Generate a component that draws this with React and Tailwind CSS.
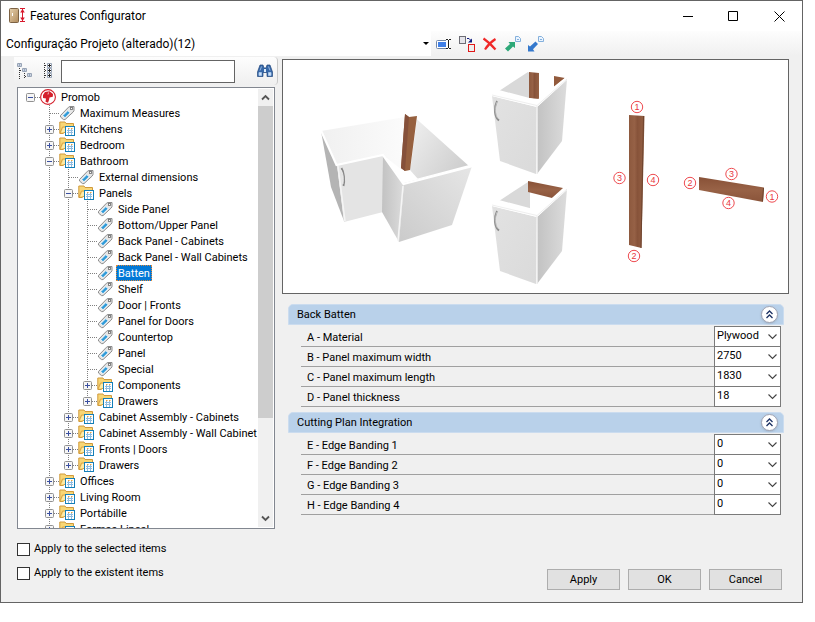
import { useState } from 'react'
import clsx from 'clsx'

const treeItems = [
  { label: 'Promob', depth: 0, icon: 'brand', state: 'open', last: true },
  { label: 'Maximum Measures', depth: 1, icon: 'tag' },
  { label: 'Kitchens', depth: 1, icon: 'folder', state: 'closed' },
  { label: 'Bedroom', depth: 1, icon: 'folder', state: 'closed' },
  { label: 'Bathroom', depth: 1, icon: 'folder', state: 'open' },
  { label: 'External dimensions', depth: 2, icon: 'tag' },
  { label: 'Panels', depth: 2, icon: 'folder', state: 'open' },
  { label: 'Side Panel', depth: 3, icon: 'tag' },
  { label: 'Bottom/Upper Panel', depth: 3, icon: 'tag' },
  { label: 'Back Panel - Cabinets', depth: 3, icon: 'tag' },
  { label: 'Back Panel - Wall Cabinets', depth: 3, icon: 'tag' },
  { label: 'Batten', depth: 3, icon: 'tag' },
  { label: 'Shelf', depth: 3, icon: 'tag' },
  { label: 'Door | Fronts', depth: 3, icon: 'tag' },
  { label: 'Panel for Doors', depth: 3, icon: 'tag' },
  { label: 'Countertop', depth: 3, icon: 'tag' },
  { label: 'Panel', depth: 3, icon: 'tag' },
  { label: 'Special', depth: 3, icon: 'tag' },
  { label: 'Components', depth: 3, icon: 'folder', state: 'closed' },
  { label: 'Drawers', depth: 3, icon: 'folder', state: 'closed', last: true },
  { label: 'Cabinet Assembly - Cabinets', depth: 2, icon: 'folder', state: 'closed' },
  { label: 'Cabinet Assembly - Wall Cabinet', depth: 2, icon: 'folder', state: 'closed' },
  { label: 'Fronts | Doors', depth: 2, icon: 'folder', state: 'closed' },
  { label: 'Drawers', depth: 2, icon: 'folder', state: 'closed', last: true },
  { label: 'Offices', depth: 1, icon: 'folder', state: 'closed' },
  { label: 'Living Room', depth: 1, icon: 'folder', state: 'closed' },
  { label: 'Portábille', depth: 1, icon: 'folder', state: 'closed' },
  { label: 'Formas Lineal', depth: 1, icon: 'folder', state: 'closed' },
]

const groups = [
  {
    title: 'Back Batten',
    fields: [
      { id: 'a', label: 'A - Material', value: 'Plywood' },
      { id: 'b', label: 'B - Panel maximum width', value: '2750' },
      { id: 'c', label: 'C - Panel maximum length', value: '1830' },
      { id: 'd', label: 'D - Panel thickness', value: '18' },
    ],
  },
  {
    title: 'Cutting Plan Integration',
    fields: [
      { id: 'e', label: 'E - Edge Banding 1', value: '0' },
      { id: 'f', label: 'F - Edge Banding 2', value: '0' },
      { id: 'g', label: 'G - Edge Banding 3', value: '0' },
      { id: 'h', label: 'H - Edge Banding 4', value: '0' },
    ],
  },
]

function BrandIcon() {
  return (
    <svg width="17" height="16" viewBox="0 0 17 16">
      <circle cx="8" cy="8" r="7.4" fill="#fff" stroke="#d4202c" strokeWidth="1.1" />
      <path d="M3 6 5 3 9.5 2.2 13 5 12.8 7.8 9.5 8.5 9 11 8 13.8 5.5 12.8 6 9.5 3 9Z" fill="#d4202c" />
      <path d="M8.5 3.5 8 5.5" stroke="#fff" strokeWidth=".7" fill="none" />
    </svg>
  )
}

function TagIcon() {
  return (
    <svg width="17" height="16" viewBox="0 0 17 16">
      <path d="M1.5 10.5 9.5 2.2 11 1.5H15V5.5L14.2 7 6 14.6H4.5L1.5 12Z" fill="#e6e6e6" stroke="#8c8c8c" strokeLinejoin="round" />
      <path d="M3.8 10.6 8.8 5.6 11 7.8 6 12.8Z" fill="#2f9ad8" stroke="#fff" strokeWidth=".8" />
      <rect x="11.5" y="2.5" width="2" height="2" fill="#fff" stroke="#777" strokeWidth=".9" />
    </svg>
  )
}

function FolderIcon() {
  return (
    <svg width="17" height="16" viewBox="0 0 17 16">
      <path d="M.8 12.5V1H6l1 1.5h7.5V11H6l-2 1.5Z" fill="#f8d675" stroke="#d09a3c" />
      <path d="M2.5 11 4.5 6.5H8V11Z" fill="#fdeaa8" />
      <path d="M1 12 3.5 6H9" fill="none" stroke="#d9a548" />
      <rect x="6.5" y="5.5" width="9" height="9" fill="#fff" stroke="#157fb8" />
      <path d="M8 9.5h6M8 11.5h6M9.5 8v6M12.5 8v6" stroke="#8fbce0" />
      <path d="M9 7.5h1.5M12 7.5h1.5" stroke="#e8a33d" />
    </svg>
  )
}

const itemIcons = { brand: BrandIcon, tag: TagIcon, folder: FolderIcon }

function Guide() {
  return (
    <svg width="19" height="16" viewBox="0 0 19 16" className="shrink-0">
      <path d="M9.5 0V16" stroke="#808080" strokeDasharray="1 1" />
    </svg>
  )
}

function Branch({ item }) {
  return (
    <svg width="19" height="16" viewBox="0 0 19 16" className="shrink-0">
      {item.depth > 0 && <path d={item.last ? 'M9.5 0V8' : 'M9.5 0V16'} stroke="#808080" strokeDasharray="1 1" />}
      <path d="M10 8.5H19" stroke="#808080" strokeDasharray="1 1" />
      {item.state && (
        <>
          <rect x="5.5" y="4.5" width="8" height="8" rx="1" fill="#f6f6f6" stroke="#919191" />
          <path d={item.state === 'open' ? 'M7 8.5h5' : 'M7 8.5h5M9.5 6v5'} stroke="#3a4fa0" />
        </>
      )}
    </svg>
  )
}

function TreeItem({ item, selected, onSelect }) {
  const Icon = itemIcons[item.icon]
  return (
    <li className="flex h-4 items-center whitespace-nowrap">
      {Array.from({ length: item.depth }, (_, i) =>
        i === 0 ? <span key={i} className="w-[19px] shrink-0" /> : <Guide key={i} />
      )}
      <Branch item={item} />
      <span className="w-[19px] shrink-0">
        <Icon />
      </span>
      <button
        onClick={onSelect}
        className={clsx(
          'h-4 px-[2px] pt-px leading-4',
          selected && 'bg-[#0078d7] text-white outline-1 -outline-offset-1 outline-dotted outline-[#e08a3c]'
        )}
      >
        {item.label}
      </button>
    </li>
  )
}

function Tree() {
  const [selected, setSelected] = useState(11)
  return (
    <div className="ml-[3px] mt-[2px] flex h-[442px] border border-[#828790] bg-white">
      <ul className="min-w-0 grow overflow-hidden pl-[3px] pt-px">
        {treeItems.map((item, i) => (
          <TreeItem key={i} item={item} selected={i === selected} onSelect={() => setSelected(i)} />
        ))}
      </ul>
      <div className="my-px mr-px flex w-[15px] shrink-0 flex-col items-center bg-[#f0f0f0]">
        <svg width="15" height="17" viewBox="1 0 15 17" className="shrink-0">
          <path d="M5 10.5 8.5 7 12 10.5" fill="none" stroke="#555" strokeWidth="1.8" />
        </svg>
        <div className="h-[312px] w-full bg-[#cdcdcd]" />
        <svg width="15" height="17" viewBox="1 0 15 17" className="mt-auto shrink-0">
          <path d="M5 6.5 8.5 10 12 6.5" fill="none" stroke="#555" strokeWidth="1.8" />
        </svg>
      </div>
    </div>
  )
}

function TitleBar() {
  return (
    <header className="flex h-[30px] items-center bg-white pl-2">
      <svg width="18" height="16" viewBox="0 0 18 16">
        <defs>
          <linearGradient id="door" x1="0" x2="1" y2="1">
            <stop offset="0" stopColor="#e5d0ad" />
            <stop offset="1" stopColor="#b08b5c" />
          </linearGradient>
        </defs>
        <rect x=".5" y=".5" width="9" height="14" rx="1" fill="url(#door)" stroke="#7c6244" />
        <path d="M3.5 5v3" stroke="#fff" />
        <path d="M11 .5h5M11 13.5h5M13.5 1v12" stroke="#d8182c" />
        <path d="M11.2 4.5 13.5 1 15.8 4.5ZM11.2 9.5 13.5 13 15.8 9.5Z" fill="#d8182c" />
      </svg>
      <h1 className="ml-[3px] font-[Roboto,sans-serif] text-[12px]">Features Configurator</h1>
      <div className="ml-auto flex">
        <button aria-label="Minimize" className="flex h-7 w-[45px] items-center justify-center">
          <svg width="11" height="11" viewBox="0 0 11 11"><path d="M0 5.5h10" stroke="#000" /></svg>
        </button>
        <button aria-label="Maximize" className="flex h-7 w-[45px] items-center justify-center">
          <svg width="11" height="11" viewBox="0 0 11 11"><path d="M.5.5h9v9h-9z" fill="none" stroke="#000" /></svg>
        </button>
        <button aria-label="Close" className="flex h-7 w-[46px] items-center justify-center">
          <svg width="11" height="11" viewBox="0 0 11 11"><path d="m.5.5 10 10m0-10-10 10" stroke="#000" /></svg>
        </button>
      </div>
    </header>
  )
}

function ProfileBar() {
  return (
    <div className="flex h-[25px] items-center bg-linear-to-b from-[#fdfdfd] to-[#f0f0f0]">
      <div className="relative flex h-full w-[430px]">
        <select
          aria-label="Profile"
          className="w-full appearance-none bg-white pl-[5px] font-[Roboto,sans-serif] text-[12px]"
        >
          <option>Configuração Projeto (alterado)(12)</option>
        </select>
        <svg width="6" height="4" viewBox="0 0 6 4" className="pointer-events-none absolute right-[2px] top-[11px]">
          <path d="M0 0h6L3 3Z" fill="#000" />
        </svg>
      </div>
      <div className="flex items-center gap-[7px] pl-1">
        <button aria-label="Rename">
          <svg width="17" height="16" viewBox="0 0 17 16">
            <rect x="1.5" y="4.5" width="12" height="8" rx="1" fill="#fff" stroke="#7288a8" />
            <rect x="3" y="6" width="8" height="5" fill="#4080e8" />
            <path d="M11 3.5h4M11 12.5h4M13.5 4v8" stroke="#fff" strokeWidth="3" />
            <path d="M11 3.5h2M14 3.5h2M11 12.5h2M14 12.5h2M13.5 4v8" stroke="#222" />
          </svg>
        </button>
        <button aria-label="Duplicate">
          <svg width="16" height="16" viewBox="0 0 16 16">
            <rect x=".5" y=".5" width="6" height="7" fill="#e4e4ea" stroke="#6d6d75" />
            <rect x="9.5" y="8.5" width="6" height="7" fill="#eee" stroke="#e01818" />
            <path d="M8 2.5h2l2 2" fill="none" stroke="#101c80" />
            <path d="M13 2.5v4H9Z" fill="#101c80" />
          </svg>
        </button>
        <button aria-label="Delete">
          <svg width="16" height="16" viewBox="0 0 16 16">
            <path d="M1.5 2.5Q8 7 13.5 13.5M13.5 3Q7 7 3 13.5" fill="none" stroke="#f02828" strokeWidth="2.2" />
          </svg>
        </button>
        <button aria-label="Import">
          <svg width="16" height="16" viewBox="0 0 16 16">
            <path d="M0 12.5 5 8 3.5 6H10V12L8 10.5 3 15.5Z" fill="#2da878" />
            <path d="M10.5.5h3l2 2v3h-5Z" fill="#eaf4ff" stroke="#84b0dc" />
            <path d="M12 3.5h2" stroke="#84b0dc" />
          </svg>
        </button>
        <button aria-label="Export">
          <svg width="16" height="16" viewBox="0 0 16 16">
            <path d="M0 15.5V9L2 10.5 7.500 5.5 10 8 5 13.2 6.5 15.5Z" fill="#3478cc" />
            <path d="M10.5.5h3l2 2v3h-5Z" fill="#eaf4ff" stroke="#84b0dc" />
            <path d="M12 3.5h2" stroke="#84b0dc" />
          </svg>
        </button>
      </div>
    </div>
  )
}

function SearchBar() {
  return (
    <div className="mt-px flex h-7 items-center rounded-r-sm border-r border-[#c8c8c8] bg-linear-to-b from-[#fdfdfd] to-[#efefef] pl-[3px] pr-1">
      <button aria-label="Collapse tree">
        <svg width="16" height="16" viewBox="0 0 16 16">
          <path d="M2.5 5v11M3 7.5h2M7.5 10v6M8 13.5h2" stroke="#333" strokeDasharray="1 1" fill="none" />
          <path d="M.5.5h4v3h-4zM5.5 5.5h4v3h-4zM10.5 10.5h4v3h-4z" fill="#fff" stroke="#98a4b6" />
          <path d="M1.5 2h2M6.5 7h2M11.5 12h2" stroke="#2d4f80" />
        </svg>
      </button>
      <button aria-label="Expand tree" className="ml-2">
        <svg width="16" height="16" viewBox="0 0 16 16">
          <path d="M3.5 0v16M4 2.5h3M4 7.5h3M4 12.5h3" stroke="#333" strokeDasharray="1 1" />
          <path d="M6.5.5h4v4h-4zM6.5 5.5h4v4h-4zM6.5 10.5h4v4h-4z" fill="#fff" stroke="#98a4b6" />
          <path d="M7 2.5h3M8.5 1v3M7 7.5h3M8.5 6v3M7 12.5h3M8.5 11v3" stroke="#222" />
        </svg>
      </button>
      <input aria-label="Search" className="ml-1 h-[23px] w-[174px] border border-[#646464] bg-white px-1" />
      <button aria-label="Find" className="ml-auto">
        <svg width="16" height="16" viewBox="0 0 16 16">
          <path d="M3 2h3l1 3h2l1-3h3l2.5 7v4.5H10v-4H6v4H.5V9Z" fill="#3768a8" stroke="#23477c" strokeWidth=".7" />
          <path d="M2 9.5h2.5v3H2zM11.5 9.5H14v3h-2.5zM4.5 3.5l-1.5 4M11.5 3.5l1.5 4" fill="#cfe2f8" stroke="#a9c9ee" strokeWidth=".8" />
          <path d="M7 6h2v3H7z" fill="#dcebfa" />
        </svg>
      </button>
    </div>
  )
}

function Marker({ x, y, n }) {
  return (
    <g>
      <circle cx={x} cy={y} r="5.7" fill="#fff" stroke="#ee4b50" />
      <text x={x} y={y + 3} textAnchor="middle" fontSize="9" fill="#e8383e">{n}</text>
    </g>
  )
}

// Base cabinet seen from above; the battens differ between variants
function Cabinet({ y, children }) {
  return (
    <g transform={`translate(0 ${y})`}>
      <path d="M528 72 499 91 530 99 530 74Z" fill="#d9d9d9" />
      {children}
      <path d="M492 96 537 107 536 174 500 161Z" fill="url(#front)" />
      <path d="M537 107 567 79 562 141 537 174Z" fill="url(#side)" />
      <path d="M492 94 499 90 537 100 566 77 567 80 537 107 492 96Z" fill="#fff" />
      <path d="M537 106V174" fill="none" stroke="#f0f0f0" strokeWidth="1.5" />
      <path d="M492 95 537 105.5 567 79" fill="none" stroke="#e2e2e2" strokeWidth=".6" />
      <path d="M497 101C493.5 108 494.5 117 499 120.5" fill="none" stroke="#8b8b8b" strokeWidth="1.8" />
      <path d="M497 102C494.5 109 495.5 116 498 118.5" fill="none" stroke="#d4d4d4" strokeWidth=".7" />
    </g>
  )
}

function Preview() {
  return (
    <svg viewBox="283 60 505 233" className="w-full border border-[#646464] bg-white font-['Liberation_Sans',Arial,sans-serif]" role="img" aria-label="Batten preview">
      <defs>
        <linearGradient id="front" x1="0" x2="1" y2="1">
          <stop offset="0" stopColor="#e2e2e2" />
          <stop offset="1" stopColor="#dadada" />
        </linearGradient>
        <linearGradient id="side" x1="0" x2="1">
          <stop offset="0" stopColor="#c2c2c2" />
          <stop offset="1" stopColor="#dcdcdc" />
        </linearGradient>
        <linearGradient id="inner" x1="0" x2="1">
          <stop offset="0" stopColor="#f0f0f0" />
          <stop offset="1" stopColor="#fbfbfb" />
        </linearGradient>
        <linearGradient id="back" x1="0" x2="1" y1=".3" y2="1">
          <stop offset="0" stopColor="#ececec" />
          <stop offset="1" stopColor="#c9c9c9" />
        </linearGradient>
        <linearGradient id="face" x1="1" x2="0" y2="1">
          <stop offset="0" stopColor="#e6e6e6" />
          <stop offset="1" stopColor="#cbcbcb" />
        </linearGradient>
        <linearGradient id="wood" x1="0" x2="1">
          <stop offset="0" stopColor="#8d593e" />
          <stop offset=".35" stopColor="#966146" />
          <stop offset=".55" stopColor="#87533a" />
          <stop offset="1" stopColor="#966144" />
        </linearGradient>
        <linearGradient id="plank" x1="0" x2="0" y2="1">
          <stop offset="0" stopColor="#885137" />
          <stop offset=".5" stopColor="#986246" />
          <stop offset="1" stopColor="#8a543a" />
        </linearGradient>
      </defs>

      {/* corner cabinet */}
      <path d="M321 131 405 117 402 170 383 155 337 165Z" fill="url(#inner)" />
      <path d="M417 118 469 165 416 179 409 171 411 164Z" fill="url(#back)" />
      <path d="M383 155 395 168 410 170 418 179 404 183Z" fill="#fff" />
      <path d="M321 131 337 165 344 221 331 187Z" fill="#b4b4b4" />
      <path d="M337 165 383 155V212L344 222Z" fill="#e4e4e4" />
      <path d="M383 155 404 184 399 242 382 212Z" fill="url(#side)" />
      <path d="M404 183 472 166 452 225 399 242Z" fill="url(#face)" />
      <path d="M321 130.5 336.5 165 383 155 403.5 184 471 166.5 417 118" fill="none" stroke="#fff" strokeWidth="2.2" />
      <path d="M338 166 345 221M403 186 398 241" stroke="#f5f5f5" strokeWidth="1.5" />
      <path d="M341.5 168C344 172 345 180 343.5 186" fill="none" stroke="#888" strokeWidth="1.8" />
      <path d="M341 170C343 173 344 178 343 184" fill="none" stroke="#eee" strokeWidth=".8" />
      <path d="M405 114 409 117 417 116 410 170 405 171 401 168Z" fill="#96603f" />
      <path d="M405 114 409 117 405 171 401 168Z" fill="#85503a" />

      <Cabinet y={0}>
        <path d="M529 72 539 73V99L529 98Z" fill="url(#wood)" />
        <path d="M554 76 565 78 554 87Z" fill="#925a3c" />
      </Cabinet>
      <Cabinet y={110}>
        <path d="M528 71 563 78 552 88 528 82Z" fill="url(#plank)" />
      </Cabinet>

      <path d="M629 115 644.5 116 641.5 248 629 245Z" fill="url(#wood)" />
      <path d="M643.5 116 641 248" stroke="#6e442f" />
      <path d="M699 177 764 187.5 763 202 699 190Z" fill="url(#plank)" />
      <path d="M763.5 188 762.5 201" stroke="#6e442f" />

      <Marker x={637} y={107} n="1" />
      <Marker x={619.5} y={178} n="3" />
      <Marker x={653} y={180} n="4" />
      <Marker x={634} y={256} n="2" />
      <Marker x={690} y={183} n="2" />
      <Marker x={731.5} y={174} n="3" />
      <Marker x={772} y={196.5} n="1" />
      <Marker x={728.5} y={203} n="4" />
    </svg>
  )
}

function Field({ field }) {
  return (
    <div className="flex h-5 border-b border-[#a0a0a0]">
      <label htmlFor={field.id} className="grow pl-1.5 pt-[3px] leading-4">{field.label}</label>
      <div className="relative -mt-px h-[21px] w-[67px]">
        <select id={field.id} className="h-full w-full appearance-none border border-[#7a7a7a] bg-white pl-[2px]">
          <option>{field.value}</option>
        </select>
        <svg width="9" height="6" viewBox="0 0 9 6" className="pointer-events-none absolute right-1 top-2">
          <path d="M.5.5 4.5 4.5 8.5.5" fill="none" stroke="#444" strokeWidth="1.1" />
        </svg>
      </div>
    </div>
  )
}

function Group({ group }) {
  const [open, setOpen] = useState(true)
  return (
    <section className="mb-[5px]">
      <div className="flex h-[21px] items-center rounded-t-[5px] border border-[#cbdcef] bg-[#b9d1ea] pl-2 pr-[5px]">
        <h2 className="pt-px">{group.title}</h2>
        <button
          aria-label="Toggle group"
          onClick={() => setOpen(!open)}
          className="ml-auto flex size-[17px] items-center justify-center rounded-full border border-[#a0a4b4] bg-white shadow-sm"
        >
          <svg width="9" height="9" viewBox="0 0 9 9">
            <path d="M1.5 4 4.5 1 7.5 4M1.5 8 4.5 5 7.5 8" fill="none" stroke="#1d3264" strokeWidth="1.3" />
          </svg>
        </button>
      </div>
      {open && (
        <div className="ml-[13px] mr-[3px] pt-[2px]">
          {group.fields.map((f) => <Field key={f.id} field={f} />)}
        </div>
      )}
    </section>
  )
}

function ApplyOption({ label }) {
  return (
    <label className="flex h-6 items-center gap-1">
      <input type="checkbox" className="size-[13px] appearance-none border border-[#333] bg-white checked:bg-[#0078d7]" />
      <span className="pt-px">{label}</span>
    </label>
  )
}

function App() {
  return (
    <div className="min-h-screen bg-white font-[Roboto,Arial,sans-serif] text-[11px] text-black">
      <main className="mr-3 border border-[#646464] bg-[#f0f0f0]">
        <TitleBar />
        <ProfileBar />
        <div className="flex gap-1 pl-[13px] pr-[13px]">
          <div className="w-[264px] shrink-0">
            <SearchBar />
            <div className="pr-[3px]">
              <Tree />
            </div>
          </div>
          <div className="min-w-0 grow pt-[3px]">
            <Preview />
            <div className="pl-1.5 pr-[5px] pt-2.5">
              {groups.map((g) => <Group key={g.title} group={g} />)}
            </div>
          </div>
        </div>
        <footer className="flex pb-3 pl-4 pr-5 pt-2">
          <div>
            <ApplyOption label="Apply to the selected items" />
            <ApplyOption label="Apply to the existent items" />
          </div>
          <div className="ml-auto flex items-end gap-2 pt-8">
            <button className="h-[21px] w-[73px] border border-[#adadad] bg-[#e1e1e1] pt-px">Apply</button>
            <button className="h-[21px] w-[73px] border border-[#adadad] bg-[#e1e1e1] pt-px">OK</button>
            <button className="h-[21px] w-[73px] border border-[#adadad] bg-[#e1e1e1] pt-px">Cancel</button>
          </div>
        </footer>
      </main>
    </div>
  )
}

export default App
